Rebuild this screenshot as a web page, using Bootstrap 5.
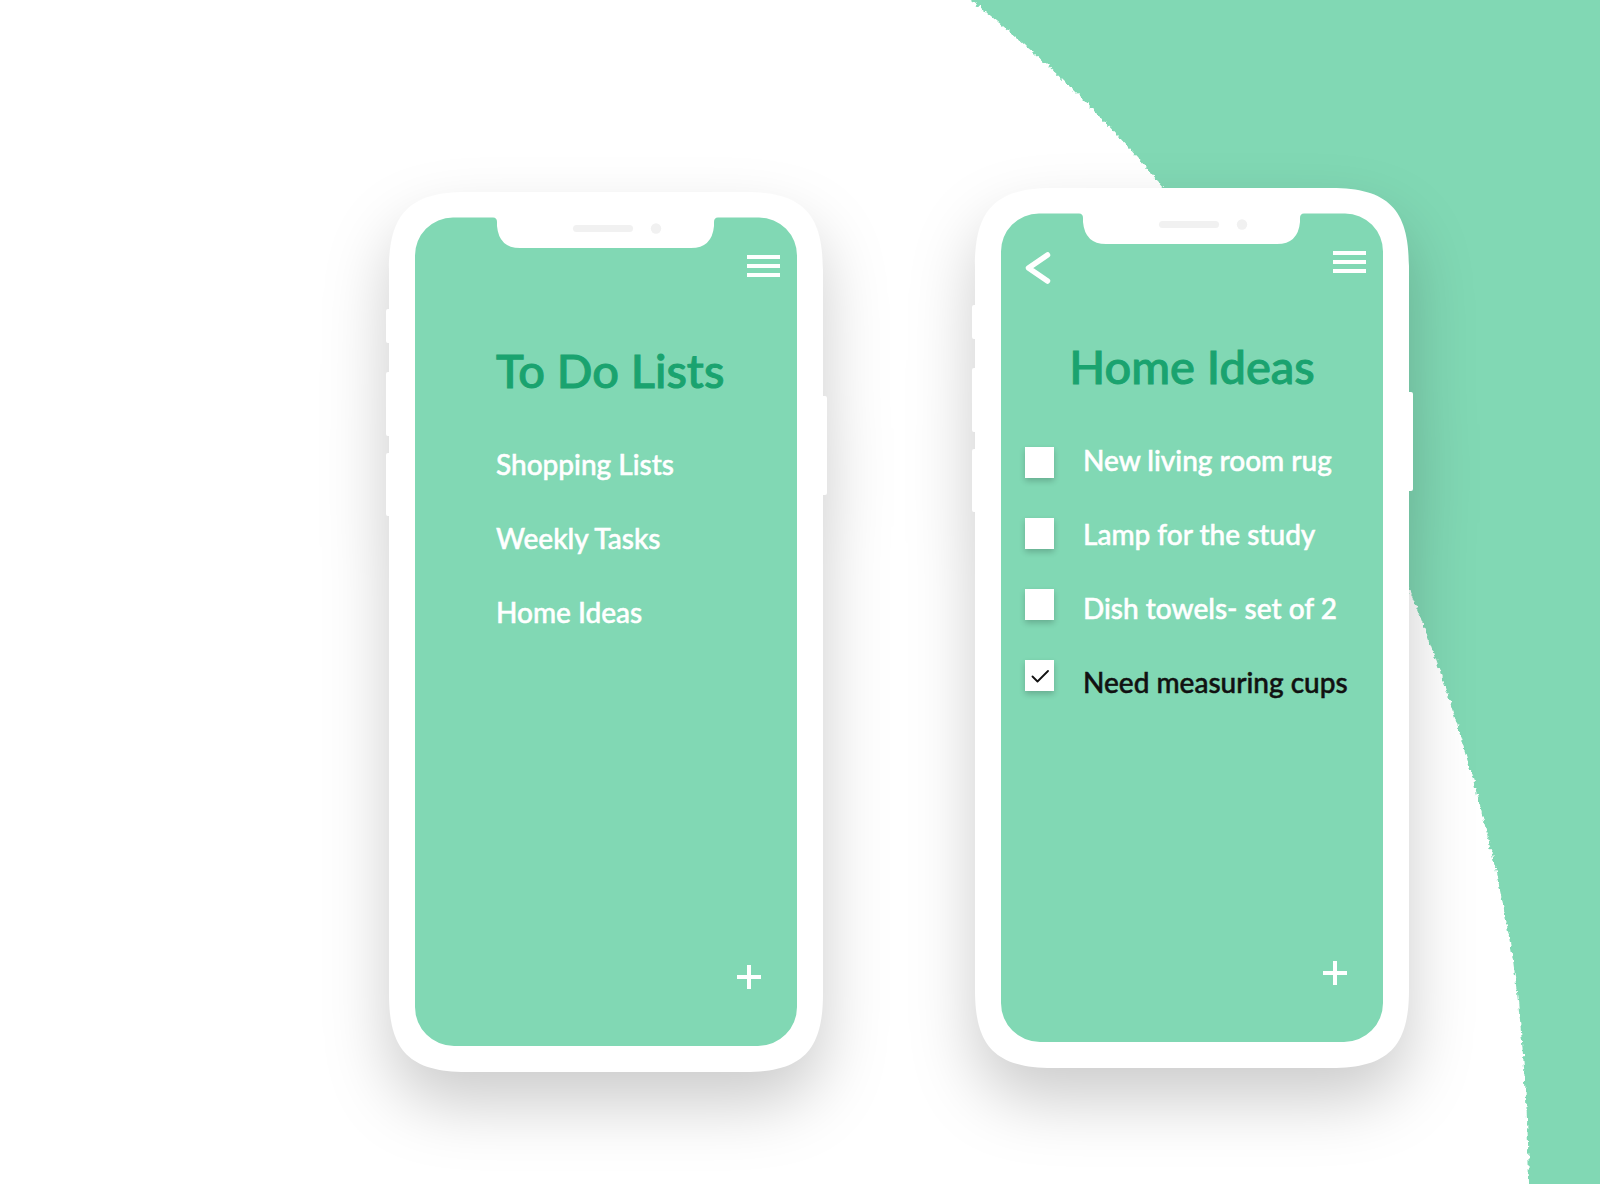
<!DOCTYPE html>
<html lang="en">
<head>
<meta charset="utf-8">
<meta name="viewport" content="width=device-width, initial-scale=1">
<title>To Do Lists</title>
<link rel="stylesheet" href="https://cdn.jsdelivr.net/npm/bootstrap@5.3.0/dist/css/bootstrap.min.css">
<style>
  :root { --mint: #81d8b4; --leaf: #1aa36f; --ink: #111; }
  body { background: #fff; font-family: Lato, "Open Sans", sans-serif; font-weight: 500; }
  .stage { padding: 188px 191px 112px 24px; column-gap: 152px; row-gap: 120px; isolation: isolate; overflow: hidden; }
  @media (max-width: 1199px) { .stage { padding-right: 24px; } }
  .backdrop { z-index: -1; }
  .mint-fill { fill: var(--mint); }
  .phone { width: 434px; min-height: 880px; isolation: isolate; }
  .shell { z-index: -1; overflow: visible; filter: drop-shadow(0 32px 32px rgba(0, 0, 0, .2)); }
  .topbar { height: 100px; padding: 63px 43px 0 50px; }
  .icon-btn { background: none; border: 0; padding: 0; line-height: 0; color: #fff; }
  .screen-title { color: var(--leaf); font-size: 47px; line-height: 60px; font-weight: 500; margin: 48px 0 0; -webkit-text-stroke: 1px var(--leaf); }
  .lists { padding: 27px 0 0 107px; }
  .lists a, .tasks label { display: block; color: #fff; font-size: 28px; line-height: 74px; text-decoration: none; white-space: nowrap; -webkit-text-stroke: .5px currentColor; }
  .titled-left { padding-left: 107px; }
  .tasks { padding: 27px 0 0 50px; column-gap: 29px; }
  .boxes { row-gap: 41px; padding-top: 24px; }
  .boxes .form-check-input { width: 29px; height: 31px; margin: 0 0 -1px; border: 0; border-radius: 0; background-color: #fff; box-shadow: 0 3px 6px rgba(0, 0, 0, .2); }
  .boxes .form-check-input:checked { background-size: 18px 18px; background-image: url("data:image/svg+xml,%3csvg xmlns='http://www.w3.org/2000/svg' viewBox='0 0 18 18'%3e%3cpath fill='none' stroke='%23111' stroke-width='1.8' stroke-linecap='round' stroke-linejoin='round' d='M1.5 9.5l5 5L17 4'/%3e%3c/svg%3e"); }
  .tasks label.done { color: var(--ink); }
  .bottombar { padding: 0 62px 83px 0; }
</style>
</head>
<body>
<main class="stage position-relative min-vh-100 d-flex flex-wrap justify-content-center justify-content-xl-end align-items-start">

  <svg class="backdrop position-absolute top-0 start-0 w-100 h-100" viewBox="0 0 1600 1184" preserveAspectRatio="xMaxYMin slice" aria-hidden="true">
    <filter id="torn" x="0" y="-40" width="1680" height="1264" filterUnits="userSpaceOnUse" color-interpolation-filters="sRGB">
      <feTurbulence type="fractalNoise" baseFrequency=".22" numOctaves="2" seed="4" result="n"/>
      <feDisplacementMap in="SourceGraphic" in2="n" scale="6" xChannelSelector="R" yChannelSelector="G"/>
    </filter>
    <path class="mint-fill" filter="url(#torn)" d="M946 -20L971 0C1040 54 1105 118 1164 188C1270 312 1350 444 1410 592C1446 675 1494 838 1513 960C1523 1035 1528 1110 1529 1184V1210H1640V-20Z"/>
  </svg>

  <svg width="0" height="0" class="position-absolute" aria-hidden="true">
    <symbol id="device" viewBox="0 0 434 880" overflow="visible">
      <path fill="#fff" d="M78 0H356C413 0 434 21 434 78V204H436Q438 204 438 206V301Q438 303 436 303H434V802C434 859 413 880 356 880H78C21 880 0 859 0 802V324H-1Q-3 324 -3 322V263Q-3 261 -1 261H0V244H-1Q-3 244 -3 242V182Q-3 180 -1 180H0V151H-1Q-3 151 -3 149V119Q-3 117 -1 117H0V78C0 21 21 0 78 0Z"/>
      <path class="mint-fill" d="M64 25.500H104Q108 25.500 108 30V34Q110 56 131 56H302Q323 56 325 34V30Q325 25.500 329 25.500H370A38 38 0 0 1 408 64V815A39 39 0 0 1 369 854H65A39 39 0 0 1 26 815V64A38 38 0 0 1 64 25.500Z"/>
      <rect x="184" y="33" width="60" height="7" rx="3.500" fill="#f1f1f1"/>
      <circle cx="267" cy="36.500" r="5.200" fill="#f1f1f1"/>
    </symbol>
    <symbol id="menu" viewBox="0 0 33 22"><path fill="currentColor" d="M0 0H33V4H0ZM0 9H33V13H0ZM0 18H33V22H0Z"/></symbol>
    <symbol id="plus" viewBox="0 0 24 24"><path fill="currentColor" d="M10 0H14V10H24V14H14V24H10V14H0V10H10Z"/></symbol>
    <symbol id="back" viewBox="0 0 26 34"><path fill="none" stroke="currentColor" stroke-width="5.500" stroke-linecap="round" stroke-linejoin="round" d="M22.500 4L3.500 17L22.500 30"/></symbol>
  </svg>

  <section class="phone position-relative d-flex flex-column mt-1" aria-labelledby="t1">
    <svg class="shell position-absolute top-0 start-0 w-100 h-100" aria-hidden="true"><use href="#device"/></svg>
    <header class="topbar d-flex justify-content-end align-items-start">
      <button type="button" class="icon-btn" aria-label="Menu"><svg width="33" height="22"><use href="#menu"/></svg></button>
    </header>
    <h1 class="screen-title titled-left" id="t1">To Do Lists</h1>
    <nav class="lists" aria-label="Lists">
      <a href="#shopping">Shopping Lists</a>
      <a href="#weekly">Weekly Tasks</a>
      <a href="#home">Home Ideas</a>
    </nav>
    <footer class="bottombar d-flex justify-content-end mt-auto">
      <button type="button" class="icon-btn" aria-label="Add list"><svg width="24" height="24"><use href="#plus"/></svg></button>
    </footer>
  </section>

  <section class="phone position-relative d-flex flex-column" id="home" aria-labelledby="t2">
    <svg class="shell position-absolute top-0 start-0 w-100 h-100" aria-hidden="true"><use href="#device"/></svg>
    <header class="topbar d-flex justify-content-between align-items-start">
      <button type="button" class="icon-btn" aria-label="Back"><svg width="26" height="34"><use href="#back"/></svg></button>
      <button type="button" class="icon-btn" aria-label="Menu"><svg width="33" height="22"><use href="#menu"/></svg></button>
    </header>
    <h2 class="screen-title text-center" id="t2">Home Ideas</h2>
    <form class="tasks d-flex align-items-start">
      <div class="boxes d-flex flex-column">
        <input class="form-check-input" type="checkbox" id="c1">
        <input class="form-check-input" type="checkbox" id="c2">
        <input class="form-check-input" type="checkbox" id="c3">
        <input class="form-check-input" type="checkbox" id="c4" checked>
      </div>
      <div>
        <label for="c1">New living room rug</label>
        <label for="c2">Lamp for the study</label>
        <label for="c3">Dish towels- set of 2</label>
        <label class="done" for="c4">Need measuring cups</label>
      </div>
    </form>
    <footer class="bottombar d-flex justify-content-end mt-auto">
      <button type="button" class="icon-btn" aria-label="Add idea"><svg width="24" height="24"><use href="#plus"/></svg></button>
    </footer>
  </section>
</main>
<script src="https://cdn.jsdelivr.net/npm/bootstrap@5.3.0/dist/js/bootstrap.bundle.min.js"></script>
</body>
</html>
